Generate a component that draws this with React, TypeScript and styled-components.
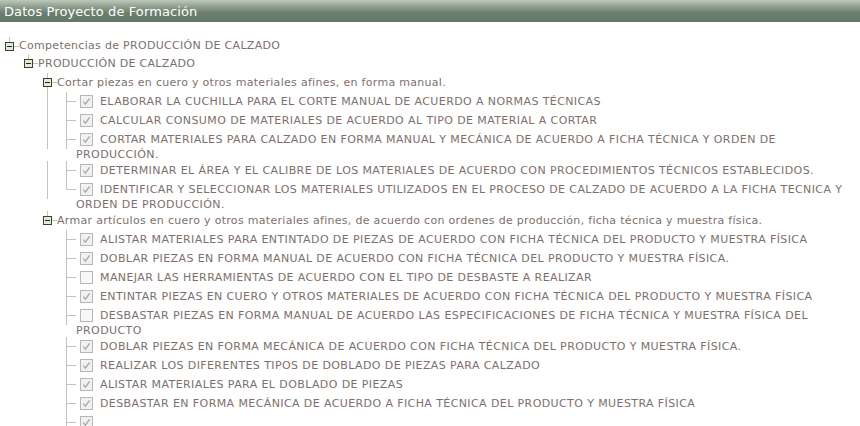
import React from 'react';
import styled, { createGlobalStyle } from 'styled-components';

const LINE = '#c6c3b8';

const GlobalStyle = createGlobalStyle`
  html, body {
    margin: 0;
    padding: 0;
    background: #fff;
  }
  body {
    font-family: "DejaVu Sans", Verdana, sans-serif;
  }
`;

const Page = styled.div`
  width: 860px;
  height: 100vh;
  overflow: hidden;
`;

const Header = styled.div`
  height: 22px;
  padding-left: 4px;
  display: flex;
  align-items: center;
  background: linear-gradient(to bottom, #bdc8ba 0%, #93a293 28%, #6c7f6e 58%, #647867 100%);
  color: #fff;
  font-size: 13px;
  letter-spacing: 0.1px;
`;

const Tree = styled.div`
  padding: 15px 2px 0 0;
  font-size: 11px;
  color: #7d706c;
`;

const NodeRow = styled.div<{ $h: number }>`
  display: flex;
  align-items: flex-start;
  height: ${(p) => p.$h}px;
`;

const LeafRow = styled.div`
  display: flex;
  align-items: flex-start;
  min-height: 19px;
`;

const Glyph = styled.svg`
  flex: none;
  display: block;
  width: 19px;
  height: 19px;
`;

const NodeLabel = styled.span<{ $h: number }>`
  line-height: ${(p) => p.$h}px;
  letter-spacing: 0.3px;
  white-space: nowrap;
`;

const LeafLabel = styled.div`
  flex: 1;
  line-height: 12px;
  letter-spacing: 0.4px;
`;

const CheckBox = styled.svg`
  display: inline-block;
  vertical-align: middle;
  width: 13px;
  height: 13px;
  margin: 3px 7px 3px 4px;
`;

type Kind = 'blank' | 'I' | 'T' | 'L';

type TreeNode = {
  label: string;
  checked?: boolean;
  children?: TreeNode[];
};

function Connector({ kind, toggle }: { kind: Kind; toggle?: boolean }) {
  return (
    <Glyph viewBox="0 0 19 19">
      {kind !== 'blank' && (
        <line x1={9.5} x2={9.5} y1={0} y2={kind === 'L' ? 9.5 : 19} stroke={LINE} />
      )}
      {(kind === 'T' || kind === 'L') && (
        <line x1={9.5} x2={19} y1={9.5} y2={9.5} stroke={LINE} />
      )}
      {toggle && (
        <g>
          <rect x={5.5} y={5.5} width={8} height={8} fill="#e2eadc" stroke="#33452f" />
          <line x1={7} x2={12} y1={9.5} y2={9.5} stroke="#1c2a1a" />
        </g>
      )}
    </Glyph>
  );
}

function Check({ checked }: { checked?: boolean }) {
  return (
    <CheckBox viewBox="0 0 13 13">
      <rect x={0.5} y={0.5} width={12} height={12} fill={checked ? '#f1f1f1' : '#f7f7f7'} stroke="#b7b7b7" />
      {checked && (
        <path d="M3.3 6.6 L5.4 9.1 L9.6 3.4" fill="none" stroke="#a9a9a9" strokeWidth={1.4} />
      )}
    </CheckBox>
  );
}

const data: TreeNode = {
  label: 'Competencias de PRODUCCIÓN DE CALZADO',
  children: [
    {
      label: 'PRODUCCIÓN DE CALZADO',
      children: [
        {
          label: 'Cortar piezas en cuero y otros materiales afines, en forma manual.',
          children: [
            { label: 'ELABORAR LA CUCHILLA PARA EL CORTE MANUAL DE ACUERDO A NORMAS TÉCNICAS', checked: true },
            { label: 'CALCULAR CONSUMO DE MATERIALES DE ACUERDO AL TIPO DE MATERIAL A CORTAR', checked: true },
            {
              label:
                'CORTAR MATERIALES PARA CALZADO EN FORMA MANUAL Y MECÁNICA DE ACUERDO A FICHA TÉCNICA Y ORDEN DE PRODUCCIÓN.',
              checked: true,
            },
            {
              label:
                'DETERMINAR EL ÁREA Y EL CALIBRE DE LOS MATERIALES DE ACUERDO CON PROCEDIMIENTOS TÉCNICOS ESTABLECIDOS.',
              checked: true,
            },
            {
              label:
                'IDENTIFICAR Y SELECCIONAR LOS MATERIALES UTILIZADOS EN EL PROCESO DE CALZADO DE ACUERDO A LA FICHA TECNICA Y ORDEN DE PRODUCCIÓN.',
              checked: true,
            },
          ],
        },
        {
          label:
            'Armar artículos en cuero y otros materiales afines, de acuerdo con ordenes de producción, ficha técnica y muestra física.',
          children: [
            {
              label: 'ALISTAR MATERIALES PARA ENTINTADO DE PIEZAS DE ACUERDO CON FICHA TÉCNICA DEL PRODUCTO Y MUESTRA FÍSICA',
              checked: true,
            },
            {
              label: 'DOBLAR PIEZAS EN FORMA MANUAL DE ACUERDO CON FICHA TÉCNICA DEL PRODUCTO Y MUESTRA FÍSICA.',
              checked: true,
            },
            { label: 'MANEJAR LAS HERRAMIENTAS DE ACUERDO CON EL TIPO DE DESBASTE A REALIZAR', checked: false },
            {
              label: 'ENTINTAR PIEZAS EN CUERO Y OTROS MATERIALES DE ACUERDO CON FICHA TÉCNICA DEL PRODUCTO Y MUESTRA FÍSICA',
              checked: true,
            },
            {
              label:
                'DESBASTAR PIEZAS EN FORMA MANUAL DE ACUERDO LAS ESPECIFICACIONES DE FICHA TÉCNICA Y MUESTRA FÍSICA DEL PRODUCTO',
              checked: false,
            },
            {
              label: 'DOBLAR PIEZAS EN FORMA MECÁNICA DE ACUERDO CON FICHA TÉCNICA DEL PRODUCTO Y MUESTRA FÍSICA.',
              checked: true,
            },
            { label: 'REALIZAR LOS DIFERENTES TIPOS DE DOBLADO DE PIEZAS PARA CALZADO', checked: true },
            { label: 'ALISTAR MATERIALES PARA EL DOBLADO DE PIEZAS', checked: true },
            {
              label: 'DESBASTAR EN FORMA MECÁNICA DE ACUERDO A FICHA TÉCNICA DEL PRODUCTO Y MUESTRA FÍSICA',
              checked: true,
            },
            { label: '', checked: true },
            { label: '', checked: true },
          ],
        },
      ],
    },
  ],
};

function renderNode(node: TreeNode, trail: boolean[], isLast: boolean, key: string): React.ReactNode {
  const indent = trail.map((last, i) => <Connector key={i} kind={last ? 'blank' : 'I'} />);
  const kind: Kind = isLast ? 'L' : 'T';

  if (!node.children) {
    return (
      <LeafRow key={key}>
        {indent}
        <Connector kind={kind} />
        <LeafLabel>
          <Check checked={node.checked} />
          {node.label}
        </LeafLabel>
      </LeafRow>
    );
  }

  const kids = node.children;
  const h = trail.length === 0 ? 17 : 19;
  return (
    <React.Fragment key={key}>
      <NodeRow $h={h}>
        {indent}
        <Connector kind={kind} toggle />
        <NodeLabel $h={h}>{node.label}</NodeLabel>
      </NodeRow>
      {kids.map((child, i) => renderNode(child, [...trail, isLast], i === kids.length - 1, `${key}-${i}`))}
    </React.Fragment>
  );
}

export default function App() {
  return (
    <Page>
      <GlobalStyle />
      <Header>Datos Proyecto de Formación</Header>
      <Tree>{renderNode(data, [], true, 'n')}</Tree>
    </Page>
  );
}
